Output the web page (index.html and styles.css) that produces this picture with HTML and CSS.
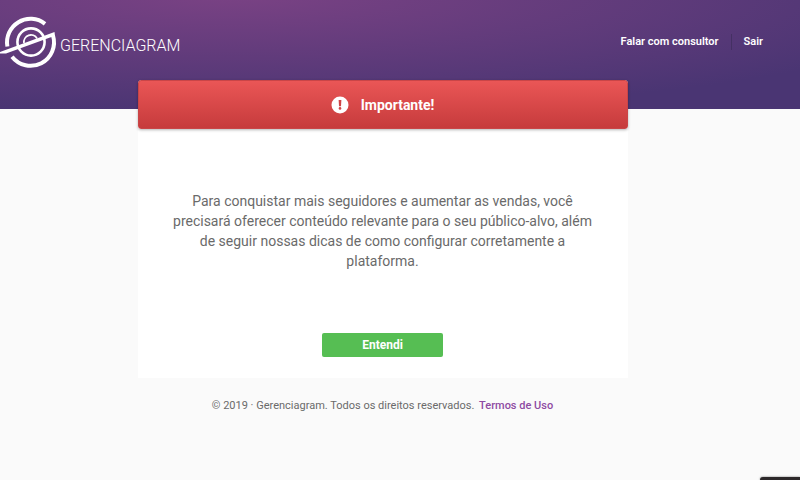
FILE: index.html
```html
<!DOCTYPE html>
<html lang="pt-BR">
<head>
<meta charset="utf-8">
<title>Gerenciagram</title>
<link rel="stylesheet" href="styles.css">
</head>
<body>
<header class="header">
  <a class="brand" href="#">
    <svg class="brand-mark" viewBox="0 0 58 56" aria-hidden="true">
      <g fill="none" stroke="#fff">
        <path stroke-width="4" d="M45 9.800A23.500 23.500 0 0 0 7.400 32.500"/>
        <path stroke-width="4" d="M12 42.800A23.500 23.500 0 0 0 53 21.500"/>
        <circle cx="31" cy="28" r="13.600" stroke-width="2.600"/>
        <path stroke-width="1.800" d="M24 29A7 7 0 0 1 37 24.500"/>
      </g>
      <path fill="#fff" d="M0 38L54.500 18L55 22L50 23.500L6 39.500H0Z"/>
    </svg>
    <span class="brand-name">GERENCIAGRAM</span>
  </a>
  <nav class="nav">
    <a href="#">Falar com consultor</a>
    <a href="#">Sair</a>
  </nav>
</header>
<main class="main">
  <section class="card">
    <h1 class="banner">
      <svg class="alert" viewBox="0 0 18 18" aria-hidden="true">
        <circle cx="9" cy="9" r="8.500" fill="#fff"/>
        <path fill="#cf4446" d="M7.600 4H10.400L10 10.200H8Z"/>
        <circle cx="9" cy="12.400" r="1.300" fill="#cf4446"/>
      </svg>
      Importante!
    </h1>
    <p class="message">Para conquistar mais seguidores e aumentar as vendas, você precisará oferecer conteúdo relevante para o seu público-alvo, além de seguir nossas dicas de como configurar corretamente a plataforma.</p>
    <button class="confirm" type="button">Entendi</button>
  </section>
  <footer class="footer">© 2019 · Gerenciagram. Todos os direitos reservados. <a href="#">Termos de Uso</a></footer>
</main>
<div class="dock"></div>
</body>
</html>
```
FILE: styles.css
```css
* {
  box-sizing: border-box;
}

body {
  margin: 0;
  min-height: 100vh;
  background: #fafafa;
  color: #6a6a6a;
  font-family: Roboto, "Liberation Sans", sans-serif;
}

a {
  color: inherit;
  text-decoration: none;
}

.header {
  display: flex;
  justify-content: space-between;
  align-items: flex-start;
  height: 109px;
  padding: 14px 37px 0 0;
  background: radial-gradient(ellipse 740px 118px at 29% -5px, #7a4284, #4a3573);
  color: #fff;
}

.brand {
  display: flex;
  align-items: center;
  gap: 2px;
}

.brand-mark {
  width: 58px;
  height: 56px;
}

.brand-name {
  padding-top: 8px;
  font-size: 16px;
  font-weight: 300;
  line-height: 20px;
}

.nav {
  display: flex;
  padding-top: 20px;
  font-size: 11px;
  font-weight: 600;
  line-height: 16px;
}

.nav a + a {
  margin-left: 12px;
  padding-left: 12px;
  border-left: 1px solid #443063;
}

.main {
  margin-top: -29px;
  padding-right: 35px;
}

.card {
  display: flex;
  flex-direction: column;
  align-items: center;
  max-width: 490px;
  margin: 0 auto;
  padding-bottom: 21px;
  border-radius: 4px 4px 0 0;
  background: #fff;
}

.banner {
  display: flex;
  align-items: center;
  justify-content: center;
  gap: 12px;
  width: 100%;
  height: 49px;
  margin: 0;
  border: 1px solid #c94547;
  border-radius: 3px;
  background: linear-gradient(#ea5656, #c63b3c);
  box-shadow: 0 1px 3px rgba(0, 0, 0, 0.3);
  color: #fff;
  font-size: 14px;
  font-weight: 700;
}

.alert {
  width: 18px;
  height: 18px;
}

.message {
  margin: 62px 32px;
  font-size: 14px;
  line-height: 20px;
  text-align: center;
}

.confirm {
  width: 121px;
  height: 24px;
  padding: 0;
  border: 0;
  border-radius: 2px;
  background: #56be53;
  color: #fff;
  font: 700 12px/24px Roboto, "Liberation Sans", sans-serif;
}

.footer {
  padding-top: 20px;
  font-size: 11px;
  line-height: 16px;
  text-align: center;
}

.footer a {
  margin-left: 2px;
  color: #8e4ba2;
  font-weight: 500;
}

.dock {
  position: fixed;
  right: 0;
  bottom: 0;
  width: 40px;
  height: 3px;
  border-top-left-radius: 3px;
  background: #2c2829;
  box-shadow: 0 0 2px rgba(0, 0, 0, 0.6);
}
```
